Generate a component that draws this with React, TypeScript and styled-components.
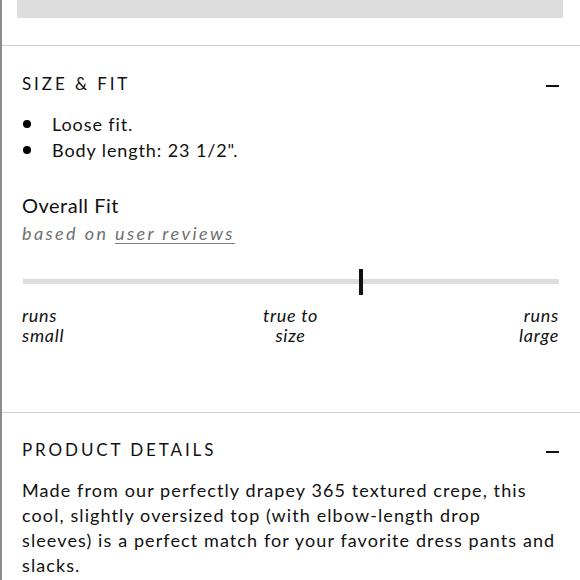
import React from "react";
import styled, { createGlobalStyle } from "styled-components";

const Global = createGlobalStyle`
  html, body { margin: 0; padding: 0; background: #fff; }
  body { font-family: "Lato", "Noto Sans", sans-serif; color: #111; }
`;

const Page = styled.div`
  border-left: 2px solid #8c8c8c;
  min-height: 580px;
  box-sizing: border-box;
`;

const TopBar = styled.div`
  height: 18px;
  margin: 0 17px 27px 15px;
  background: #dddddd;
`;

const Section = styled.section<{ $pad: number }>`
  border-top: 1.5px solid #cfcfcf;
  padding: ${(p) => p.$pad}px 21px 0 20px;
`;

const Header = styled.div`
  display: flex;
  align-items: center;
  justify-content: space-between;
  height: 24px;
`;

const Title = styled.h2`
  margin: 0;
  font-size: 17px;
  font-weight: 400;
  letter-spacing: 2.9px;
  line-height: 24px;
`;

const Minus = styled.span`
  width: 13px;
  height: 2px;
  background: #111;
  margin-top: 3px;
`;

const List = styled.ul`
  list-style: none;
  margin: 15px 0 0;
  padding: 0;
`;

const Item = styled.li`
  display: flex;
  align-items: center;
  font-size: 18px;
  line-height: 26px;
  letter-spacing: 0.9px;
  &::before {
    content: "";
    width: 8px;
    height: 8px;
    border-radius: 50%;
    background: #000;
    margin: 0 21px 0 1px;
  }
`;

const FitTitle = styled.div`
  margin-top: 29px;
  font-size: 20px;
  line-height: 26px;
  letter-spacing: 0.5px;
`;

const Based = styled.div`
  margin-top: 2px;
  font-size: 18px;
  font-style: italic;
  color: #707070;
  letter-spacing: 2.4px;
  line-height: 26px;
`;

const Link = styled.span`
  text-decoration: underline;
  text-decoration-color: #808080;
  text-underline-offset: 3px;
`;

const Track = styled.div`
  position: relative;
  height: 5px;
  background: #dddddd;
  margin: 33px 0 0 1px;
`;

const Marker = styled.div`
  position: absolute;
  top: -10px;
  width: 4px;
  height: 26px;
  background: #111;
  transform: translateX(-50%);
`;

const Labels = styled.div`
  display: grid;
  grid-template-columns: 1fr 1fr 1fr;
  margin-top: 21px;
  padding-bottom: 67px;
  font-size: 18px;
  font-style: italic;
  line-height: 20px;
  letter-spacing: 0.7px;
`;

const Label = styled.div<{ $align: "left" | "center" | "right" }>`
  text-align: ${(p) => p.$align};
`;

const Paragraph = styled.p`
  margin: 16px 0 0;
  font-size: 18px;
  line-height: 25px;
  letter-spacing: 1.1px;
  white-space: nowrap;
`;

export default function App() {
  const fit = 63;
  return (
    <>
      <Global />
      <Page>
        <TopBar />
        <Section $pad={26}>
          <Header>
            <Title>SIZE &amp; FIT</Title>
            <Minus />
          </Header>
          <List>
            <Item>Loose fit.</Item>
            <Item>Body length: 23 1/2".</Item>
          </List>
          <FitTitle>Overall Fit</FitTitle>
          <Based>
            based on <Link>user reviews</Link>
          </Based>
          <Track>
            <Marker style={{ left: `${fit}%` }} />
          </Track>
          <Labels>
            <Label $align="left">
              runs
              <br />
              small
            </Label>
            <Label $align="center">
              true to
              <br />
              size
            </Label>
            <Label $align="right">
              runs
              <br />
              large
            </Label>
          </Labels>
        </Section>
        <Section $pad={25}>
          <Header>
            <Title>PRODUCT DETAILS</Title>
            <Minus />
          </Header>
          <Paragraph>
            Made from our perfectly drapey 365 textured crepe, this
            <br />
            cool, slightly oversized top (with elbow-length drop
            <br />
            sleeves) is a perfect match for your favorite dress pants and
            <br />
            slacks.
          </Paragraph>
        </Section>
      </Page>
    </>
  );
}
